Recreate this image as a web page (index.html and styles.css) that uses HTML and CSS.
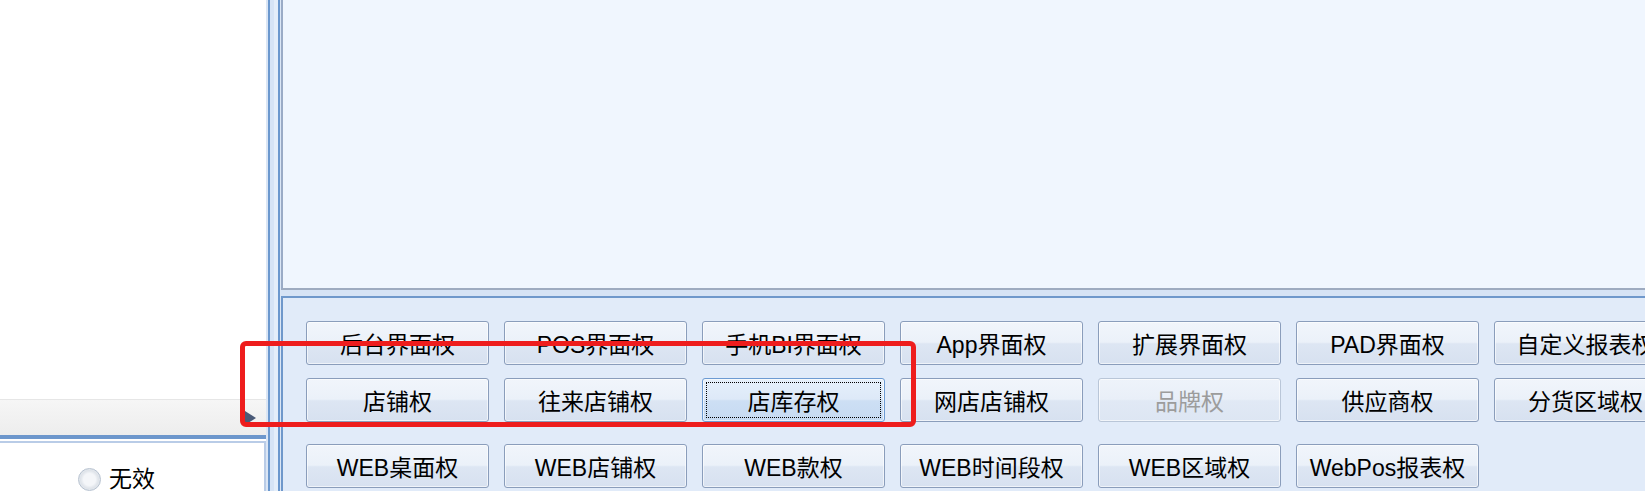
FILE: index.html
```html
<!DOCTYPE html>
<html lang="zh-CN">
<head>
<meta charset="utf-8">
<title>权限</title>
<link rel="stylesheet" href="styles.css">
</head>
<body>
<div class="app">
  <div class="left">
    <div class="left-top"></div>
    <div class="band"><span class="tri"></span></div>
    <div class="band-line"></div>
    <div class="left-bottom">
      <label class="radio"><span class="radio-dot"></span><span class="radio-text">无效</span></label>
    </div>
  </div>
  <div class="splitter"></div>
  <div class="right">
    <div class="right-top"></div>
    <div class="right-gap"></div>
    <div class="right-bottom">
      <div class="grid">
        <button class="btn">后台界面权</button>
        <button class="btn">POS界面权</button>
        <button class="btn">手机BI界面权</button>
        <button class="btn">App界面权</button>
        <button class="btn">扩展界面权</button>
        <button class="btn">PAD界面权</button>
        <button class="btn">自定义报表权</button>

        <button class="btn">店铺权</button>
        <button class="btn">往来店铺权</button>
        <button class="btn focus"><span class="focus-ring">店库存权</span></button>
        <button class="btn">网店店铺权</button>
        <button class="btn disabled">品牌权</button>
        <button class="btn">供应商权</button>
        <button class="btn">分货区域权</button>

        <button class="btn r3">WEB桌面权</button>
        <button class="btn r3">WEB店铺权</button>
        <button class="btn r3">WEB款权</button>
        <button class="btn r3">WEB时间段权</button>
        <button class="btn r3">WEB区域权</button>
        <button class="btn r3">WebPos报表权</button>
      </div>
    </div>
  </div>
  <div class="annot"></div>
</div>
</body>
</html>
```

FILE: styles.css
```css
html, body {
  margin: 0;
  padding: 0;
}
body {
  width: 1645px;
  height: 491px;
  overflow: hidden;
  font-family: "Liberation Sans", "Noto Sans CJK SC", sans-serif;
  font-size: 23px;
  color: #000;
}
.app {
  position: relative;
  display: flex;
  width: 1645px;
  height: 491px;
  overflow: hidden;
}
.left {
  width: 266px;
  flex: none;
  display: flex;
  flex-direction: column;
  background: #fff;
}
.left-top {
  height: 400px;
  background: #fff;
}
.band {
  height: 36px;
  box-sizing: border-box;
  border-top: 1px solid #e6e6e6;
  background: linear-gradient(#f6f6f6, #ededed);
  display: flex;
  justify-content: flex-end;
  align-items: center;
  padding-right: 10px;
}
.tri {
  width: 0;
  height: 0;
  border-left: 11px solid #4a5a78;
  border-top: 7px solid transparent;
  border-bottom: 7px solid transparent;
}
.band-line {
  height: 4px;
  background: #6d97cc;
}
.left-bottom {
  flex: 1;
  margin-top: 2px;
  border-top: 2px solid #b9cce7;
  border-right: 2px solid #b9cce7;
  background: #fff;
  padding: 24px 0 0 78px;
}
.radio {
  display: flex;
  align-items: center;
  gap: 8px;
}
.radio-dot {
  width: 21px;
  height: 21px;
  border-radius: 50%;
  border: 1px solid #b7c2d0;
  background: radial-gradient(circle at 50% 50%, #f4f6f9 0 40%, #dfe4ea 60%, #eef1f5 100%);
}
.radio-text {
  line-height: 24px;
}
.splitter {
  width: 15px;
  flex: none;
  background: linear-gradient(to right,
    #dbe6f5 0 2px, #6b98ce 2px 4px, #d6e4f6 4px 8px,
    #e4eefa 8px 12px, #6b98ce 12px 14px, #dbe6f5 14px 15px);
}
.right {
  flex: 1;
  display: flex;
  flex-direction: column;
  min-width: 0;
  background: #d8e5f7;
}
.right-top {
  height: 290px;
  box-sizing: border-box;
  background: #f0f6fe;
  border-left: 2px solid #9aabc6;
  border-bottom: 2px solid #9eabc0;
}
.right-gap {
  height: 6px;
  background: #d6e3f5;
}
.right-bottom {
  flex: 1;
  border-top: 2px solid #6f98cb;
  border-left: 2px solid #6f98cb;
  background: #e1ebf9;
  padding: 23px 0 0 23px;
  overflow: hidden;
}
.grid {
  display: grid;
  grid-template-columns: repeat(7, 183px);
  grid-auto-rows: 44px;
  column-gap: 15px;
  row-gap: 13px;
}
.btn {
  box-sizing: border-box;
  height: 44px;
  margin: 0;
  padding: 0;
  border: 1px solid #8a9dbb;
  border-radius: 3px;
  background: linear-gradient(#f1f5fb 0%, #ebf1f9 48%, #dde6f3 52%, #d7e1f0 100%);
  box-shadow: inset 0 0 0 1px rgba(255,255,255,0.6);
  font-family: inherit;
  font-size: 23px;
  color: #000;
  display: flex;
  align-items: center;
  justify-content: center;
  white-space: nowrap;
  overflow: hidden;
}
.btn.r3 {
  margin-top: 9px;
}
.btn.disabled {
  color: #9c9c9c;
  border-color: #b9c6d8;
  background: linear-gradient(#eef3fa 0%, #e9eff8 48%, #e1e9f5 52%, #dde6f3 100%);
}
.btn.focus {
  border-color: #6d9bd3;
  background: linear-gradient(#e6f0fb 0%, #dde9f8 48%, #cddff4 52%, #c6daf2 100%);
  padding: 3px;
}
.focus-ring {
  flex: 1;
  align-self: stretch;
  display: flex;
  align-items: center;
  justify-content: center;
  border: 1px dotted #000;
}
.annot {
  position: absolute;
  left: 240px;
  top: 341px;
  width: 676px;
  height: 86px;
  box-sizing: border-box;
  border: 5px solid #ee1d1d;
  border-radius: 6px;
  pointer-events: none;
}
```
